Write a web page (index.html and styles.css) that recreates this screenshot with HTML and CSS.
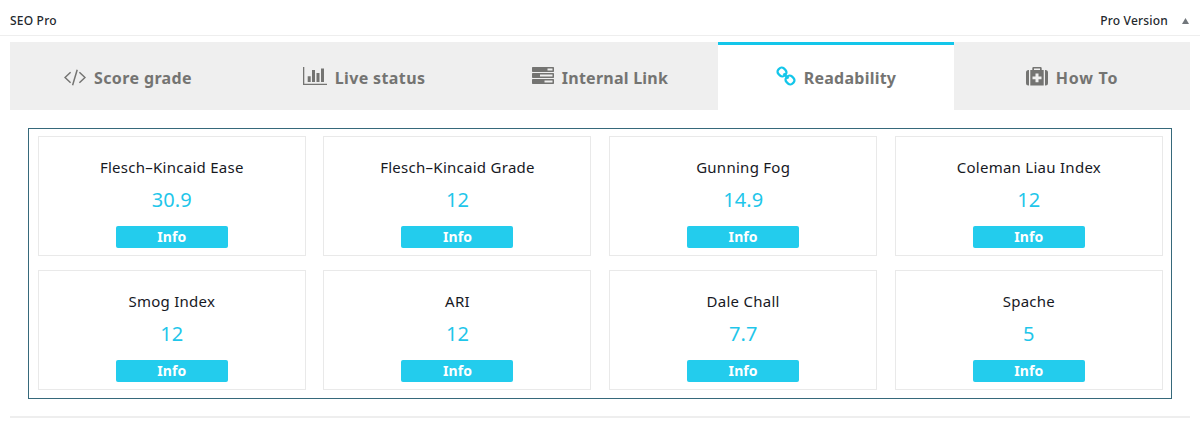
FILE: index.html
```
<!DOCTYPE html>
<html lang="en">
<head>
<meta charset="utf-8">
<title>SEO Pro</title>
<link rel="stylesheet" href="styles.css">
</head>
<body>
<header class="panel-head">
  <h2 class="panel-title">SEO Pro</h2>
  <div class="panel-side"><span class="panel-version">Pro Version</span>
    <svg class="toggle" viewBox="0 0 7 6"><path d="M3.5 0 7 6H0z"/></svg></div>
</header>
<main class="panel">
  <nav class="tabs">
    <a class="tab tab-score"><svg class="icon" width="22" height="17" viewBox="0 0 22 17"><path class="line" d="M6.600 3.200 1 8.500l5.600 5.300M15.400 3.200 21 8.500l-5.600 5.300M13.200.8 8.600 16.200"/></svg><span>Score grade</span></a>
    <a class="tab tab-live"><svg class="icon" width="24" height="18" viewBox="0 0 24 18"><path d="M0 0h1.300v16.700H24V18H0zM4.700 9.300h3v5.700h-3zM9 3h3v12H9zM13.500 6h3v9h-3zM18 1.500h3V15h-3z"/></svg><span>Live status</span></a>
    <a class="tab tab-link"><svg class="icon" width="22" height="17" viewBox="0 0 22 17"><path fill-rule="evenodd" d="M.7 0h20.600q.7 0 .7.7v3.600q0 .7-.7.7H.7Q0 5 0 4.300V.7Q0 0 .7 0zM15.500 1.500v2h5v-2zM.7 6h20.600q.7 0 .7.7v3.600q0 .7-.7.7H.7q-.7 0-.7-.7V6.700Q0 6 .7 6zM8 7.500v2h12.500v-2zM.7 12h20.600q.7 0 .7.7v3.600q0 .7-.7.7H.7q-.7 0-.7-.7v-3.600q0-.7.7-.7zM12.500 13.500v2h8v-2z"/></svg><span>Internal Link</span></a>
    <a class="tab tab-read active"><svg class="icon" width="20" height="20" viewBox="0 0 20 20"><g class="chain"><rect x="1.700" y="2.100" width="8.600" height="7.800" rx="3.300" transform="rotate(42 6 6)"/><rect x="9.700" y="10.100" width="8.600" height="7.800" rx="3.300" transform="rotate(42 14 14)"/><path d="m7.500 7.500 5 5"/></g></svg><span>Readability</span></a>
    <a class="tab tab-how"><svg class="icon" width="22" height="19" viewBox="0 0 22 19"><path fill-rule="evenodd" d="M3 3v15.500h-.5Q0 18.500 0 16V5.500Q0 3 2.500 3zM19 3v15.500h.5Q22 18.500 22 16V5.500Q22 3 19.500 3zM4.300 3h2V1.200Q6.300 0 7.500 0h7q1.200 0 1.200 1.200V3h2v15.500H4.300zM8 3h6V1.600H8zM9.500 6.500v3h-3v2.800h3v3h3v-3h3V9.500h-3v-3z"/></svg><span>How To</span></a>
  </nav>
  <section class="scores">
    <article class="card"><h3 class="name">Flesch–Kincaid Ease</h3><p class="value">30.9</p><button class="info">Info</button></article>
    <article class="card"><h3 class="name">Flesch–Kincaid Grade</h3><p class="value">12</p><button class="info">Info</button></article>
    <article class="card"><h3 class="name">Gunning Fog</h3><p class="value">14.9</p><button class="info">Info</button></article>
    <article class="card"><h3 class="name">Coleman Liau Index</h3><p class="value">12</p><button class="info">Info</button></article>
    <article class="card"><h3 class="name">Smog Index</h3><p class="value">12</p><button class="info">Info</button></article>
    <article class="card"><h3 class="name">ARI</h3><p class="value">12</p><button class="info">Info</button></article>
    <article class="card"><h3 class="name">Dale Chall</h3><p class="value">7.7</p><button class="info">Info</button></article>
    <article class="card"><h3 class="name">Spache</h3><p class="value">5</p><button class="info">Info</button></article>
  </section>
</main>
</body>
</html>
```
FILE: styles.css
```
* { box-sizing: border-box; margin: 0; padding: 0; }
body { background: #fff; font-family: "Noto Sans", "Open Sans", sans-serif; color: #17191f; }
.panel-head { display: flex; justify-content: space-between; height: 36px; padding: 5px 11px 0 10px; border-bottom: 1px solid #eee; line-height: 31px; }
.panel-title, .panel-version { font-size: 12px; font-weight: 500; letter-spacing: .2px; color: #23282d; }
.panel-side { display: flex; align-items: center; gap: 14px; }
.toggle { width: 7px; height: 6px; fill: #72777c; margin-top: 2px; }
.panel { margin: 6px 10px 0; padding-bottom: 17px; border-bottom: 2px solid #eee; }
.tabs { display: grid; grid-template-columns: repeat(5, 236px); height: 68px; background: #efefef; }
.tab { display: flex; align-items: center; justify-content: center; gap: 8px; padding-top: 1px; border-top: 3px solid transparent; font-size: 16px; line-height: 24px; font-weight: 700; letter-spacing: .38px; color: #747472; }
.tab-link, .tab-read { letter-spacing: .24px; }
.tab-how { letter-spacing: .8px; }
.icon { fill: #747472; flex: none; margin-bottom: 4px; }
.tab-score .icon { margin-bottom: 2px; }
.tab-link .icon { margin-bottom: 5px; }
.line { fill: none; stroke: #747472; stroke-width: 1.5; }
.active { background: #fff; border-top-color: #13c6ea; }
.chain { fill: none; stroke: #13c6ea; stroke-width: 2.3; }
.scores { display: grid; grid-template-columns: repeat(4, 268px); grid-auto-rows: 120px; gap: 14px 17.700px; margin: 18px 18px 0; padding: 7px 8.800px; border: 1px solid #36697b; height: 271px; }
.card { display: flex; flex-direction: column; align-items: center; padding-top: 19px; border: 1px solid #e9e9e9; }
.name { font-size: 15px; line-height: 22px; font-weight: 400; letter-spacing: .27px; }
.value { margin-top: 8px; font-size: 20px; line-height: 28px; font-weight: 400; letter-spacing: .1px; color: #1fc6ea; }
.info { width: 112px; height: 22px; margin-top: 12px; border: 0; border-radius: 2px; background: #23cced; color: #fff; font: 700 14px/22px "Noto Sans", sans-serif; letter-spacing: .1px; }
```
